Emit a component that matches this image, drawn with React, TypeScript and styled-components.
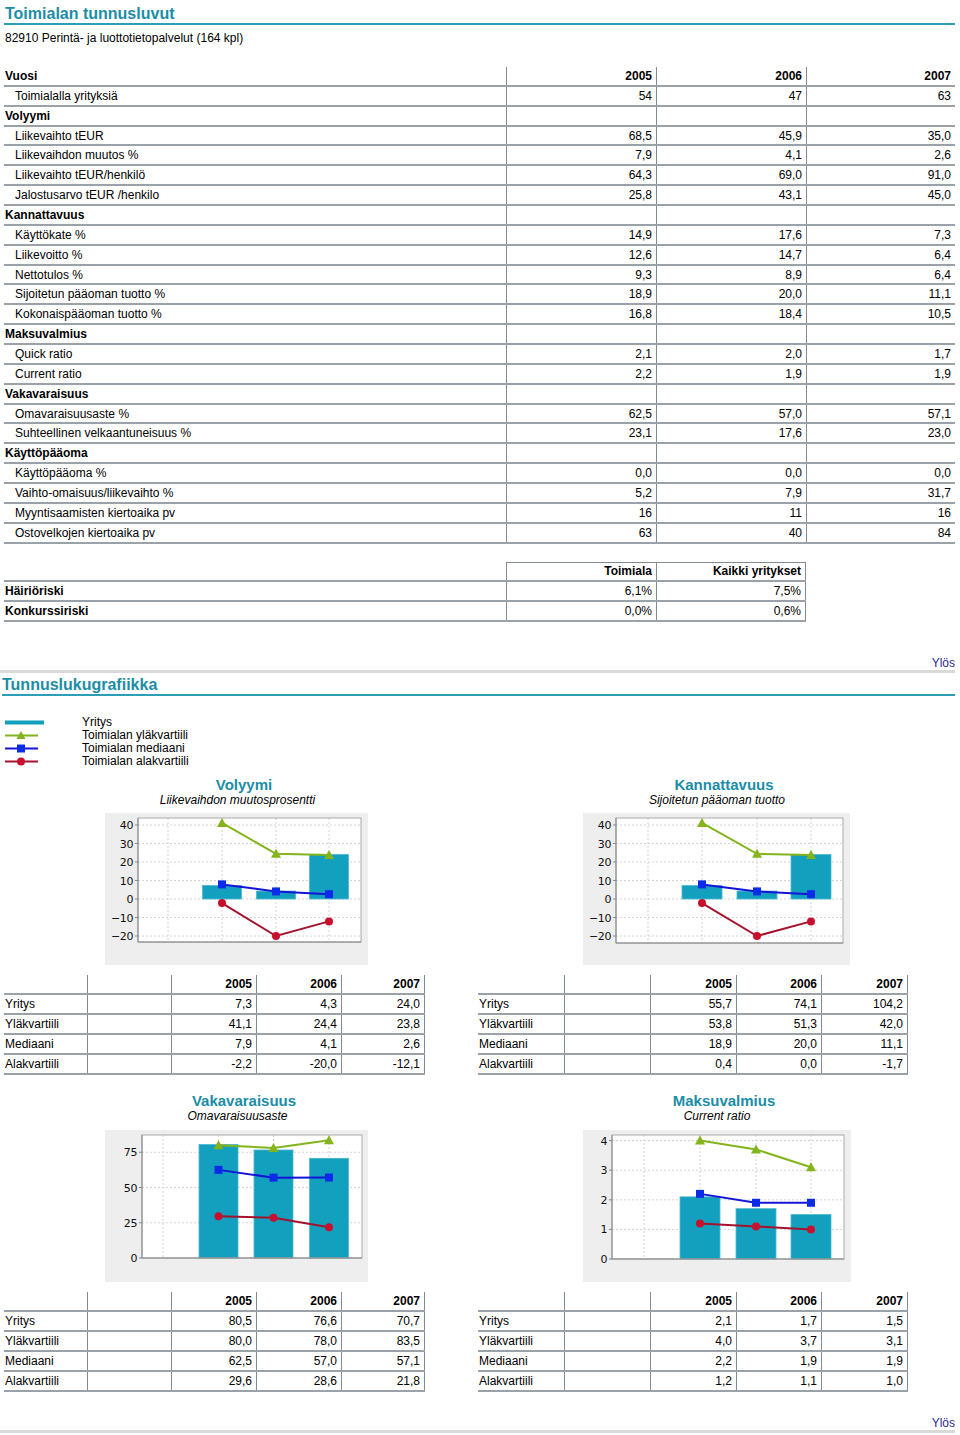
import React from 'react';
import styled, { createGlobalStyle } from 'styled-components';

const GlobalStyle = createGlobalStyle`
  html, body { margin: 0; padding: 0; background: #ffffff; }
  body {
    font-family: "Liberation Sans", Arial, sans-serif;
    font-size: 12px;
    color: #000;
  }
`;

const TEAL_TEXT = '#1b8da6';
const TEAL_LINE = '#2a9fb6';
const RULE = '#9aa2a9';
const VRULE = '#828b93';
const BAR = '#13a0be';
const GREEN = '#84b41c';
const BLUE = '#1414d8';
const BLUE_M = '#0a2ce8';
const RED = '#a4122e';
const RED_M = '#c8102e';

const Page = styled.div`
  width: 960px;
  box-sizing: border-box;
  padding: 0 5px 0 4px;
`;

const PageTitle = styled.h1`
  margin: 0;
  padding: 5px 0 0 1px;
  font-size: 16px;
  line-height: 18px;
  font-weight: bold;
  color: ${TEAL_TEXT};
  border-bottom: 2px solid ${TEAL_LINE};
`;

const SectionTitle = styled.h2`
  margin: 0 0 0 -2px;
  padding: 3px 0 0 0;
  font-size: 16px;
  line-height: 18px;
  font-weight: bold;
  color: ${TEAL_TEXT};
  border-bottom: 2px solid ${TEAL_LINE};
`;

const Subtitle = styled.div`
  margin-top: 6px;
  padding-left: 1px;
  line-height: 14px;
`;

const Table = styled.div<{ $mt: number; $fit?: boolean }>`
  margin-top: ${(p) => p.$mt}px;
  width: ${(p) => (p.$fit ? 'max-content' : 'auto')};
`;

const Row = styled.div<{ $cols: string; $h: number }>`
  display: grid;
  grid-template-columns: ${(p) => p.$cols};
  height: ${(p) => p.$h}px;
  box-sizing: border-box;
  border-bottom: 2px solid ${RULE};
`;

const HeadRow = styled.div<{ $cols: string; $h: number }>`
  display: grid;
  grid-template-columns: ${(p) => p.$cols};
  height: ${(p) => p.$h}px;
  box-sizing: border-box;
  border-bottom: 2px solid ${RULE};
`;

const LabelCell = styled.div<{ $kind: 'head' | 'item' | 'plain' }>`
  display: flex;
  align-items: center;
  padding-left: ${(p) => (p.$kind === 'item' ? 11 : 1)}px;
  font-weight: ${(p) => (p.$kind === 'head' ? 'bold' : 'normal')};
  white-space: nowrap;
`;

const ValueCell = styled.div<{ $bold?: boolean; $top?: boolean; $right?: boolean }>`
  display: flex;
  align-items: center;
  justify-content: flex-end;
  padding-right: 4px;
  border-left: 1px solid ${VRULE};
  border-top: ${(p) => (p.$top ? `1px solid ${VRULE}` : 'none')};
  border-right: ${(p) => (p.$right ? `1px solid ${VRULE}` : 'none')};
  font-weight: ${(p) => (p.$bold ? 'bold' : 'normal')};
  white-space: nowrap;
`;

const UpRow = styled.div<{ $mt: number }>`
  margin-top: ${(p) => p.$mt}px;
  text-align: right;
  line-height: 14px;
`;

const UpLink = styled.a`
  color: #2a2a96;
  text-decoration: none;
  font-size: 12px;
`;

const GrayBar = styled.div`
  height: 3px;
  margin-left: -4px;
  background: #d9d9d9;
`;

const Legend = styled.div`
  margin-top: 20px;
  display: grid;
  grid-template-columns: 78px 1fr;
`;

const LegendSymbol = styled.svg`
  display: block;
  width: 40px;
  height: 13px;
`;

const LegendText = styled.div`
  line-height: 13px;
  white-space: nowrap;
`;

const ChartGrid = styled.div<{ $mt: number }>`
  margin-top: ${(p) => p.$mt}px;
  display: grid;
  grid-template-columns: 474px 478px;
`;

const Panel = styled.div`
  display: flex;
  flex-direction: column;
  align-items: flex-start;
`;

const PanelTitle = styled.div<{ $padLeft: number }>`
  align-self: stretch;
  padding-left: ${(p) => p.$padLeft}px;
  text-align: center;
  font-size: 15px;
  line-height: 17px;
  font-weight: bold;
  color: ${TEAL_TEXT};
`;

const PanelSub = styled.div<{ $padRight: number }>`
  align-self: stretch;
  padding-right: ${(p) => p.$padRight}px;
  text-align: center;
  font-style: italic;
  line-height: 14px;
`;

const ChartBox = styled.div<{ $ml: number; $mt: number; $w: number; $h: number }>`
  margin-left: ${(p) => p.$ml}px;
  margin-top: ${(p) => p.$mt}px;
  width: ${(p) => p.$w}px;
  height: ${(p) => p.$h}px;
  background: #eeeeee;
`;

const SmallTable = styled.div<{ $mt: number }>`
  margin-top: ${(p) => p.$mt}px;
  width: max-content;
`;

type ChartCfg = {
  w: number;
  h: number;
  px0: number;
  px1: number;
  py0: number;
  py1: number;
  zero: number;
  k: number;
  ticks: number[];
  grid: number[];
  barW: number;
  bars: number[];
  upper: number[];
  median: number[];
  lower: number[];
};

const fmtTick = (v: number) => (v < 0 ? `\u2212${Math.abs(v)}` : `${v}`);

function Chart({ c }: { c: ChartCfg }) {
  const y = (v: number) => c.zero - v * c.k;
  const xs = c.grid.slice(1);
  const pts = (arr: number[]) => arr.map((v, i) => `${xs[i]},${y(v)}`).join(' ');
  return (
    <svg width={c.w} height={c.h} viewBox={`0 0 ${c.w} ${c.h}`}>
      <rect x={c.px0} y={c.py0} width={c.px1 - c.px0} height={c.py1 - c.py0} fill="#ffffff" />
      {c.ticks.map((t) => (
        <line
          key={`h${t}`}
          x1={c.px0}
          x2={c.px1}
          y1={y(t)}
          y2={y(t)}
          stroke="#d4d4d4"
          strokeWidth={1}
          strokeDasharray="2 2"
        />
      ))}
      {c.grid.map((gx) => (
        <line
          key={`v${gx}`}
          x1={gx}
          x2={gx}
          y1={c.py0}
          y2={c.py1}
          stroke="#d4d4d4"
          strokeWidth={1}
          strokeDasharray="2 2"
        />
      ))}
      {c.bars.map((v, i) => {
        const top = Math.min(y(v), c.zero);
        const hh = Math.abs(y(v) - c.zero);
        return (
          <rect
            key={`b${i}`}
            x={xs[i] - c.barW / 2}
            y={top}
            width={c.barW}
            height={hh}
            fill={BAR}
            stroke="#4cb8d0"
            strokeWidth={0.8}
          />
        );
      })}
      <rect
        x={c.px0}
        y={c.py0}
        width={c.px1 - c.px0}
        height={c.py1 - c.py0}
        fill="none"
        stroke="#aaaaaa"
        strokeWidth={1}
      />
      <line x1={c.px0} x2={c.px0} y1={c.py0} y2={c.py1} stroke="#888" strokeWidth={1} />
      <line x1={c.px0} x2={c.px1} y1={c.py1} y2={c.py1} stroke="#888" strokeWidth={1} />
      {c.ticks.map((t) => (
        <g key={`t${t}`}>
          <line x1={c.px0 - 3} x2={c.px0} y1={y(t)} y2={y(t)} stroke="#888" strokeWidth={1} />
          <text
            x={c.px0 - 5}
            y={y(t) + 4}
            textAnchor="end"
            fontFamily='"DejaVu Sans", sans-serif'
            fontSize={11}
            fill="#111"
            letterSpacing={-0.4}
          >
            {fmtTick(t)}
          </text>
        </g>
      ))}
      <polyline points={pts(c.lower)} fill="none" stroke={RED} strokeWidth={2} />
      {c.lower.map((v, i) => (
        <circle key={`r${i}`} cx={xs[i]} cy={y(v)} r={4} fill={RED_M} />
      ))}
      <polyline points={pts(c.median)} fill="none" stroke={BLUE} strokeWidth={2} />
      {c.median.map((v, i) => (
        <rect key={`m${i}`} x={xs[i] - 4} y={y(v) - 4} width={8} height={8} fill={BLUE_M} />
      ))}
      <polyline points={pts(c.upper)} fill="none" stroke={GREEN} strokeWidth={2} />
      {c.upper.map((v, i) => (
        <polygon
          key={`u${i}`}
          points={`${xs[i]},${y(v) - 5} ${xs[i] + 5},${y(v) + 4} ${xs[i] - 5},${y(v) + 4}`}
          fill={GREEN}
        />
      ))}
    </svg>
  );
}

type MainRow = { label: string; kind: 'head' | 'item'; vals?: string[] };

const mainRows: MainRow[] = [
  { label: 'Toimialalla yrityksiä', kind: 'item', vals: ['54', '47', '63'] },
  { label: 'Volyymi', kind: 'head' },
  { label: 'Liikevaihto tEUR', kind: 'item', vals: ['68,5', '45,9', '35,0'] },
  { label: 'Liikevaihdon muutos %', kind: 'item', vals: ['7,9', '4,1', '2,6'] },
  { label: 'Liikevaihto tEUR/henkilö', kind: 'item', vals: ['64,3', '69,0', '91,0'] },
  { label: 'Jalostusarvo tEUR /henkilo', kind: 'item', vals: ['25,8', '43,1', '45,0'] },
  { label: 'Kannattavuus', kind: 'head' },
  { label: 'Käyttökate %', kind: 'item', vals: ['14,9', '17,6', '7,3'] },
  { label: 'Liikevoitto %', kind: 'item', vals: ['12,6', '14,7', '6,4'] },
  { label: 'Nettotulos %', kind: 'item', vals: ['9,3', '8,9', '6,4'] },
  { label: 'Sijoitetun pääoman tuotto %', kind: 'item', vals: ['18,9', '20,0', '11,1'] },
  { label: 'Kokonaispääoman tuotto %', kind: 'item', vals: ['16,8', '18,4', '10,5'] },
  { label: 'Maksuvalmius', kind: 'head' },
  { label: 'Quick ratio', kind: 'item', vals: ['2,1', '2,0', '1,7'] },
  { label: 'Current ratio', kind: 'item', vals: ['2,2', '1,9', '1,9'] },
  { label: 'Vakavaraisuus', kind: 'head' },
  { label: 'Omavaraisuusaste %', kind: 'item', vals: ['62,5', '57,0', '57,1'] },
  { label: 'Suhteellinen velkaantuneisuus %', kind: 'item', vals: ['23,1', '17,6', '23,0'] },
  { label: 'Käyttöpääoma', kind: 'head' },
  { label: 'Käyttöpääoma %', kind: 'item', vals: ['0,0', '0,0', '0,0'] },
  { label: 'Vaihto-omaisuus/liikevaihto %', kind: 'item', vals: ['5,2', '7,9', '31,7'] },
  { label: 'Myyntisaamisten kiertoaika pv', kind: 'item', vals: ['16', '11', '16'] },
  { label: 'Ostovelkojen kiertoaika pv', kind: 'item', vals: ['63', '40', '84'] },
];

const MAIN_COLS = '502px 150px 150px 149px';
const MAIN_H = 19.87;
const RISK_COLS = '502px 150px 150px';

type PanelData = {
  title: string;
  sub: string;
  titlePad: number;
  subPad: number;
  chartMl: number;
  chartMt: number;
  tableMt: number;
  cols: string;
  rows: [string, string[]][];
  chart: ChartCfg;
};

const names = ['Yritys', 'Yläkvartiili', 'Mediaani', 'Alakvartiili'];
const mk = (a: string[][]): [string, string[]][] => names.map((n, i) => [n, a[i]]);

const volyymiChart: ChartCfg = {
  w: 263,
  h: 152,
  px0: 33,
  px1: 256,
  py0: 5,
  py1: 129,
  zero: 86,
  k: 1.85,
  ticks: [40, 30, 20, 10, 0, -10, -20],
  grid: [63, 117, 171, 224],
  barW: 39,
  bars: [7.3, 4.3, 24.0],
  upper: [41.1, 24.4, 23.8],
  median: [7.9, 4.1, 2.6],
  lower: [-2.2, -20.0, -12.1],
};

const kannattavuusChart: ChartCfg = {
  ...volyymiChart,
  w: 267,
  px0: 33,
  px1: 260,
  py1: 130,
  grid: [65, 119, 174, 228],
  barW: 40,
};

const vakavaraisuusChart: ChartCfg = {
  w: 263,
  h: 152,
  px0: 37,
  px1: 257,
  py0: 5,
  py1: 128,
  zero: 128,
  k: 1.41,
  ticks: [75, 50, 25, 0],
  grid: [58, 113.5, 168.5, 224],
  barW: 39,
  bars: [80.5, 76.6, 70.7],
  upper: [80.0, 78.0, 83.5],
  median: [62.5, 57.0, 57.1],
  lower: [29.6, 28.6, 21.8],
};

const maksuvalmiusChart: ChartCfg = {
  w: 268,
  h: 152,
  px0: 29,
  px1: 261,
  py0: 5,
  py1: 129,
  zero: 129,
  k: 29.6,
  ticks: [4, 3, 2, 1, 0],
  grid: [61, 117, 173, 228],
  barW: 40,
  bars: [2.1, 1.7, 1.5],
  upper: [4.0, 3.7, 3.1],
  median: [2.2, 1.9, 1.9],
  lower: [1.2, 1.1, 1.0],
};

const LEFT_COLS = '83px 84px 85px 85px 84px';
const RIGHT_COLS = '86px 86px 86px 85px 87px';

const panelsTop: PanelData[] = [
  {
    title: 'Volyymi',
    sub: 'Liikevaihdon muutosprosentti',
    titlePad: 6,
    subPad: 7,
    chartMl: 101,
    chartMt: 6.5,
    tableMt: 10,
    cols: LEFT_COLS,
    rows: mk([
      ['7,3', '4,3', '24,0'],
      ['41,1', '24,4', '23,8'],
      ['7,9', '4,1', '2,6'],
      ['-2,2', '-20,0', '-12,1'],
    ]),
    chart: volyymiChart,
  },
  {
    title: 'Kannattavuus',
    sub: 'Sijoitetun pääoman tuotto',
    titlePad: 14,
    subPad: 0,
    chartMl: 105,
    chartMt: 6.5,
    tableMt: 10,
    cols: RIGHT_COLS,
    rows: mk([
      ['55,7', '74,1', '104,2'],
      ['53,8', '51,3', '42,0'],
      ['18,9', '20,0', '11,1'],
      ['0,4', '0,0', '-1,7'],
    ]),
    chart: kannattavuusChart,
  },
];

const panelsBottom: PanelData[] = [
  {
    title: 'Vakavaraisuus',
    sub: 'Omavaraisuusaste',
    titlePad: 6,
    subPad: 7,
    chartMl: 101,
    chartMt: 7.5,
    tableMt: 10,
    cols: LEFT_COLS,
    rows: mk([
      ['80,5', '76,6', '70,7'],
      ['80,0', '78,0', '83,5'],
      ['62,5', '57,0', '57,1'],
      ['29,6', '28,6', '21,8'],
    ]),
    chart: vakavaraisuusChart,
  },
  {
    title: 'Maksuvalmius',
    sub: 'Current ratio',
    titlePad: 14,
    subPad: 0,
    chartMl: 105,
    chartMt: 7.5,
    tableMt: 10,
    cols: RIGHT_COLS,
    rows: mk([
      ['2,1', '1,7', '1,5'],
      ['4,0', '3,7', '3,1'],
      ['2,2', '1,9', '1,9'],
      ['1,2', '1,1', '1,0'],
    ]),
    chart: maksuvalmiusChart,
  },
];

function ChartPanel({ p }: { p: PanelData }) {
  return (
    <Panel>
      <PanelTitle $padLeft={p.titlePad}>{p.title}</PanelTitle>
      <PanelSub $padRight={p.subPad}>{p.sub}</PanelSub>
      <ChartBox $ml={p.chartMl} $mt={p.chartMt} $w={p.chart.w} $h={p.chart.h}>
        <Chart c={p.chart} />
      </ChartBox>
      <SmallTable $mt={p.tableMt}>
        <HeadRow $cols={p.cols} $h={20}>
          <LabelCell $kind="plain" />
          <ValueCell />
          <ValueCell $bold>2005</ValueCell>
          <ValueCell $bold>2006</ValueCell>
          <ValueCell $bold $right>
            2007
          </ValueCell>
        </HeadRow>
        {p.rows.map(([name, vals]) => (
          <Row key={name} $cols={p.cols} $h={20}>
            <LabelCell $kind="plain">{name}</LabelCell>
            <ValueCell />
            <ValueCell>{vals[0]}</ValueCell>
            <ValueCell>{vals[1]}</ValueCell>
            <ValueCell $right>{vals[2]}</ValueCell>
          </Row>
        ))}
      </SmallTable>
    </Panel>
  );
}

function LegendIcon({ kind }: { kind: 'bar' | 'up' | 'med' | 'low' }) {
  if (kind === 'bar') {
    return (
      <LegendSymbol viewBox="0 0 40 13">
        <rect x={1} y={4.5} width={39} height={4} fill={BAR} />
      </LegendSymbol>
    );
  }
  const color = kind === 'up' ? GREEN : kind === 'med' ? BLUE : RED;
  return (
    <LegendSymbol viewBox="0 0 40 13">
      <line x1={1} x2={34} y1={6.5} y2={6.5} stroke={color} strokeWidth={2} />
      {kind === 'up' && <polygon points="17,2 21.5,10 12.5,10" fill={GREEN} />}
      {kind === 'med' && <rect x={13} y={2.5} width={8} height={8} fill={BLUE_M} />}
      {kind === 'low' && <circle cx={17} cy={6.5} r={4} fill={RED_M} />}
    </LegendSymbol>
  );
}

export default function App() {
  return (
    <>
      <GlobalStyle />
      <Page>
        <PageTitle>Toimialan tunnusluvut</PageTitle>
        <Subtitle>82910 Perintä- ja luottotietopalvelut (164 kpl)</Subtitle>

        <Table $mt={22}>
          <HeadRow $cols={MAIN_COLS} $h={MAIN_H}>
            <LabelCell $kind="head">Vuosi</LabelCell>
            <ValueCell $bold>2005</ValueCell>
            <ValueCell $bold>2006</ValueCell>
            <ValueCell $bold>2007</ValueCell>
          </HeadRow>
          {mainRows.map((r) => (
            <Row key={r.label} $cols={MAIN_COLS} $h={MAIN_H}>
              <LabelCell $kind={r.kind}>{r.label}</LabelCell>
              <ValueCell>{r.vals?.[0]}</ValueCell>
              <ValueCell>{r.vals?.[1]}</ValueCell>
              <ValueCell>{r.vals?.[2]}</ValueCell>
            </Row>
          ))}
        </Table>

        <Table $mt={18} $fit>
          <HeadRow $cols={RISK_COLS} $h={20}>
            <LabelCell $kind="plain" />
            <ValueCell $bold $top>
              Toimiala
            </ValueCell>
            <ValueCell $bold $top $right>
              Kaikki yritykset
            </ValueCell>
          </HeadRow>
          <Row $cols={RISK_COLS} $h={20}>
            <LabelCell $kind="head">Häiriöriski</LabelCell>
            <ValueCell>6,1%</ValueCell>
            <ValueCell $right>7,5%</ValueCell>
          </Row>
          <Row $cols={RISK_COLS} $h={20}>
            <LabelCell $kind="head">Konkurssiriski</LabelCell>
            <ValueCell>0,0%</ValueCell>
            <ValueCell $right>0,6%</ValueCell>
          </Row>
        </Table>

        <UpRow $mt={34}>
          <UpLink href="#top">Ylös</UpLink>
        </UpRow>
        <GrayBar />

        <SectionTitle>Tunnuslukugrafiikka</SectionTitle>

        <Legend>
          <LegendIcon kind="bar" />
          <LegendText>Yritys</LegendText>
          <LegendIcon kind="up" />
          <LegendText>Toimialan yläkvartiili</LegendText>
          <LegendIcon kind="med" />
          <LegendText>Toimialan mediaani</LegendText>
          <LegendIcon kind="low" />
          <LegendText>Toimialan alakvartiili</LegendText>
        </Legend>

        <ChartGrid $mt={8}>
          {panelsTop.map((p) => (
            <ChartPanel key={p.title} p={p} />
          ))}
        </ChartGrid>
        <ChartGrid $mt={16.5}>
          {panelsBottom.map((p) => (
            <ChartPanel key={p.title} p={p} />
          ))}
        </ChartGrid>

        <UpRow $mt={24}>
          <UpLink href="#top">Ylös</UpLink>
        </UpRow>
        <GrayBar />
      </Page>
    </>
  );
}
